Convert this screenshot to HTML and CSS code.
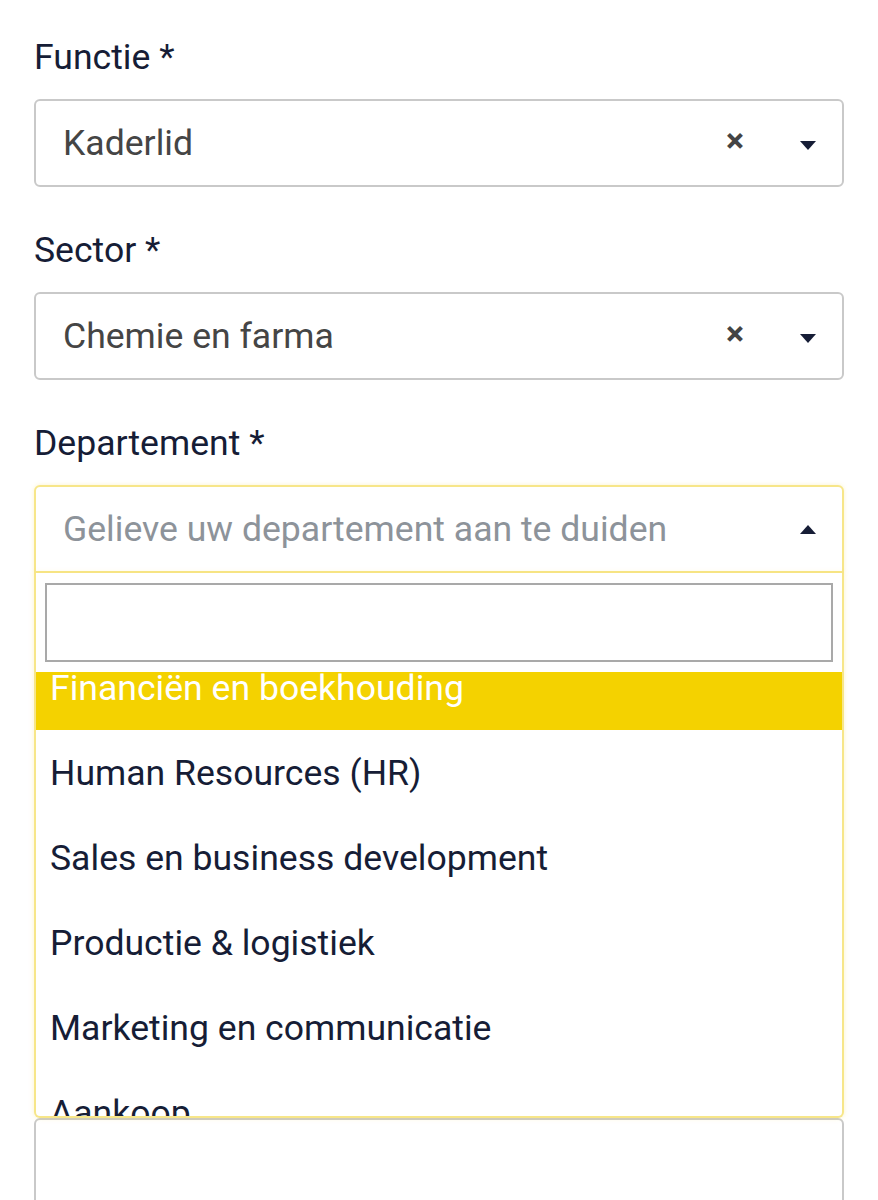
FILE: index.html
```html
<!DOCTYPE html>
<html lang="nl">
<head>
  <meta charset="UTF-8">
  <meta name="viewport" content="width=device-width, initial-scale=1.0">
  <title>Profiel</title>
  <link rel="stylesheet" href="styles.css">
</head>
<body>
  <form class="form">
    <div class="field">
      <label class="field-label">Functie *</label>
      <div class="select">
        <span class="select-value">Kaderlid</span>
        <span class="select-clear">&times;</span>
        <span class="select-arrow down"></span>
      </div>
    </div>

    <div class="field">
      <label class="field-label">Sector *</label>
      <div class="select">
        <span class="select-value">Chemie en farma</span>
        <span class="select-clear">&times;</span>
        <span class="select-arrow down"></span>
      </div>
    </div>

    <div class="field field-open">
      <label class="field-label">Departement *</label>
      <div class="select open">
        <span class="select-value placeholder">Gelieve uw departement aan te duiden</span>
        <span class="select-arrow up"></span>
      </div>
      <div class="dropdown">
        <div class="dropdown-search">
          <input type="text" class="search-input">
        </div>
        <div class="dropdown-results">
          <ul class="options">
            <li class="option highlighted">Financiën en boekhouding</li>
            <li class="option">Human Resources (HR)</li>
            <li class="option">Sales en business development</li>
            <li class="option">Productie &amp; logistiek</li>
            <li class="option">Marketing en communicatie</li>
            <li class="option">Aankoop</li>
            <li class="option">IT</li>
          </ul>
        </div>
      </div>
    </div>

    <div class="field field-next">
      <div class="select"></div>
    </div>
  </form>
</body>
</html>
```

FILE: styles.css
```css
body {
  margin: 0;
  padding: 0;
  background: #fff;
  font-family: Roboto, "Noto Sans", Arial, sans-serif;
  color: #161d36;
}
.form {
  padding: 37px 34px 0 34px;
  width: 810px;
}
.field {
  margin-bottom: 43px;
}
.field-open {
  position: relative;
}
.field-label {
  display: block;
  font-size: 35.6px;
  line-height: 40px;
  margin-bottom: 22px;
  color: #161d36;
}
.select {
  box-sizing: border-box;
  height: 88px;
  border: 2px solid #c9c9c9;
  border-radius: 6px;
  display: flex;
  align-items: center;
  padding: 0 26px 0 27px;
  background: #fff;
}
.select.open {
  border-color: #f7e689;
  border-bottom-left-radius: 0;
  border-bottom-right-radius: 0;
  box-shadow: 0 0 4px rgba(247, 222, 100, 0.35);
}
.select-value {
  flex: 1;
  font-size: 35.6px;
  color: #454545;
  white-space: nowrap;
}
.select-value.placeholder {
  color: #8d939a;
}
.select-clear {
  font-size: 34px;
  font-weight: bold;
  color: #444;
  line-height: 1;
  margin-right: 56px;
  margin-top: -6px;
}
.select-arrow {
  width: 0;
  height: 0;
  border-left: 8px solid transparent;
  border-right: 8px solid transparent;
}
.select-arrow.down {
  border-top: 9px solid #161d36;
  margin-top: 4px;
}
.select-arrow.up {
  border-bottom: 9px solid #161d36;
}
.dropdown {
  position: absolute;
  left: 0;
  right: 0;
  top: 150px;
  box-sizing: border-box;
  height: 545px;
  border: 2px solid #f7e689;
  border-top: none;
  border-radius: 0 0 6px 6px;
  background: #fff;
  box-shadow: 0 0 5px rgba(247, 222, 100, 0.35);
  z-index: 2;
  display: flex;
  flex-direction: column;
}
.dropdown-search {
  padding: 10px 9px 10px 9px;
}
.search-input {
  box-sizing: border-box;
  width: 100%;
  height: 79px;
  border: 2px solid #a9a9a9;
  outline: none;
  font-size: 32px;
  padding: 0 12px;
}
.dropdown-results {
  flex: 1;
  overflow: hidden;
}
.options {
  list-style: none;
  margin: -27px 0 0 0;
  padding: 0;
}
.option {
  height: 85px;
  display: flex;
  align-items: center;
  padding-left: 14px;
  font-size: 35.6px;
  color: #161d36;
}
.option.highlighted {
  background: #f4d200;
  color: #fff;
}
.field-next {
  margin-top: 545px;
}
```
